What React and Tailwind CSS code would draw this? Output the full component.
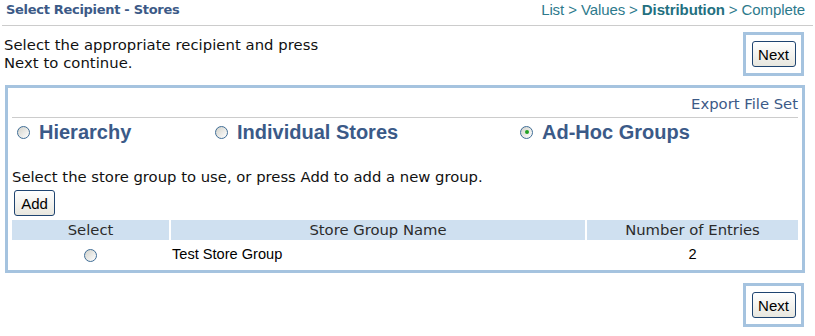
import React from "react";

function Radio({ checked }) {
  return (
    <span className="relative inline-block w-[13px] h-[13px] rounded-full border border-[#3f6d96] bg-gradient-to-br from-[#d2d2cb] to-white shrink-0">
      {checked && (
        <span className="absolute left-[3.5px] top-[3.5px] w-[4px] h-[4px] rounded-full bg-[#21a121]" />
      )}
    </span>
  );
}

function XpButton({ children, className = "" }) {
  return (
    <button
      className={`h-[26px] rounded-[3px] border border-[#1f4470] bg-gradient-to-b from-white to-[#e8e7df] text-black font-['Liberation_Sans'] text-[15px] leading-none ${className}`}
    >
      {children}
    </button>
  );
}

function NextBox() {
  return (
    <div className="w-[61px] h-[44px] border-[3px] border-[#a5c3df] flex items-center justify-center">
      <XpButton className="w-[44px]">Next</XpButton>
    </div>
  );
}

export default function App() {
  const options = [
    { label: "Hierarchy", width: "w-[198px]" },
    { label: "Individual Stores", width: "w-[305px]" },
    { label: "Ad-Hoc Groups", width: "flex-1", checked: true },
  ];

  return (
    <div className="w-[815px] h-[336px] bg-white font-['DejaVu_Sans'] text-[14.8px] text-[#111]">
      {/* Title bar */}
      <div className="mx-[2px] h-[26px] border-b border-[#cccccc] flex justify-between items-start pt-[1px] pl-[4px] pr-[8px]">
        <span className="font-bold text-[13px] tracking-[-0.3px] leading-[18px] text-[#3c5a87]">
          Select Recipient - Stores
        </span>
        <span className="font-['Liberation_Sans'] text-[15px] tracking-[-0.1px] leading-[18px] text-[#2d7a8c]">
          List &gt; Values &gt; <b className="text-[#23707f]">Distribution</b> &gt; Complete
        </span>
      </div>

      {/* Intro */}
      <div className="flex justify-between items-start pt-[6px] pl-[4px] pr-[11px]">
        <p className="mt-[4px] leading-[18px] tracking-[0.05px]">
          Select the appropriate recipient and press
          <br />
          Next to continue.
        </p>
        <NextBox />
      </div>

      {/* Main panel */}
      <div className="mt-[9px] ml-[5px] w-[800px] border-[3px] border-[#a5c3df] px-[4px] pb-[2px]">
        <div className="border-b border-[#cccccc] pt-[7px] pb-[4px] text-right leading-[18px] text-[#3c5a87]">
          Export File Set
        </div>

        <div className="flex h-[28px] items-center">
          {options.map((o) => (
            <label key={o.label} className={`${o.width} flex items-center gap-[9px] pl-[5px]`}>
              <Radio checked={o.checked} />
              <span className="font-['Liberation_Sans'] font-bold text-[20px] leading-none text-[#3b5a88]">
                {o.label}
              </span>
            </label>
          ))}
        </div>

        <p className="mt-[22px] leading-[18px]">
          Select the store group to use, or press Add to add a new group.
        </p>

        <XpButton className="mt-[4px] ml-[2px] w-[41px]">Add</XpButton>

        <div className="mt-[4px] grid grid-cols-[157px_414px_211px] gap-x-[2px] gap-y-[2px]">
          <div className="h-[20px] bg-[#cfe0f0] text-center text-[#2b2b2b] leading-[20px]">Select</div>
          <div className="h-[20px] bg-[#cfe0f0] text-center text-[#2b2b2b] leading-[20px]">Store Group Name</div>
          <div className="h-[20px] bg-[#cfe0f0] text-center text-[#2b2b2b] leading-[20px]">Number of Entries</div>

          <div className="h-[26px] flex items-center justify-center">
            <Radio />
          </div>
          <div className="h-[26px] flex items-center pl-[1px] font-['Liberation_Sans'] text-[14.6px] text-black">
            Test Store Group
          </div>
          <div className="h-[26px] flex items-center justify-center font-['Liberation_Sans'] text-[14.6px] text-black">
            2
          </div>
        </div>
      </div>

      {/* Bottom */}
      <div className="mt-[10px] flex justify-end pr-[11px]">
        <NextBox />
      </div>
    </div>
  );
}
